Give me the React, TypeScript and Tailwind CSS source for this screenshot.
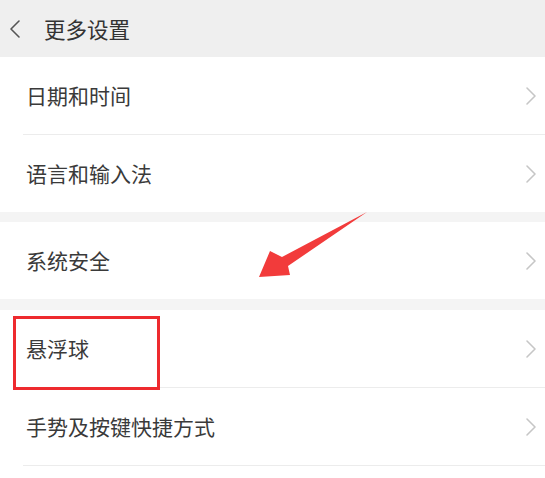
import React from 'react';

interface Item {
  label: string;
  divider: boolean;
}

const groups: Item[][] = [
  [
    { label: '日期和时间', divider: true },
    { label: '语言和输入法', divider: false }
  ],
  [{ label: '系统安全', divider: false }],
  [
    { label: '悬浮球', divider: true },
    { label: '手势及按键快捷方式', divider: true }
  ]
];

function Chevron() {
  return (
    <svg width="12" height="20" viewBox="0 0 12 20" fill="none" className="shrink-0">
      <path d="M2 2l8 8-8 8" stroke="#c6c6c6" strokeWidth="1.6" strokeLinecap="round" strokeLinejoin="round" />
    </svg>
  );
}

function Row({ item }: { item: Item }) {
  return (
    <div className="ml-[23px] bg-white">
      <div
        className={`flex h-[77px] box-content items-center justify-between pl-[3px] pr-[8px] ${
          item.divider ? 'border-b border-[#ececec]' : ''
        }`}
      >
        <span className="text-[21px] leading-none text-[#3a3a3a]">{item.label}</span>
        <Chevron />
      </div>
    </div>
  );
}

export default function App() {
  return (
    <div
      className="relative h-[478px] w-[545px] overflow-hidden bg-white"
      style={{ fontFamily: '"Noto Sans CJK SC", "Noto Sans", sans-serif' }}
    >
      {/* 顶部标题栏 */}
      <div className="flex h-[57px] items-center bg-[#efefef] pl-[9px]">
        <svg width="12" height="20" viewBox="0 0 12 20" fill="none">
          <path d="M10 2L2 10l8 8" stroke="#555" strokeWidth="1.6" strokeLinecap="round" strokeLinejoin="round" />
        </svg>
        <span className="ml-[23px] text-[21.5px] leading-none text-[#333]">更多设置</span>
      </div>

      <div className="flex flex-col bg-[#f4f4f4]">
        {groups.map((group, i) => (
          <div key={i} className={`bg-white ${i === 1 ? 'mt-[10px]' : i === 2 ? 'mt-[11px]' : ''}`}>
            {group.map(item => (
              <Row key={item.label} item={item} />
            ))}
          </div>
        ))}
      </div>

      {/* 标注 */}
      <div className="absolute left-[13px] top-[316px] h-[74px] w-[147px] border-[3px] border-[#ee2a2f]" />
      <svg className="absolute left-0 top-0" width="545" height="478" viewBox="0 0 545 478">
        <polygon points="367,212 282,257 270,251 259,277 290,275 288,266" fill="#f23b3b" />
      </svg>
    </div>
  );
}
